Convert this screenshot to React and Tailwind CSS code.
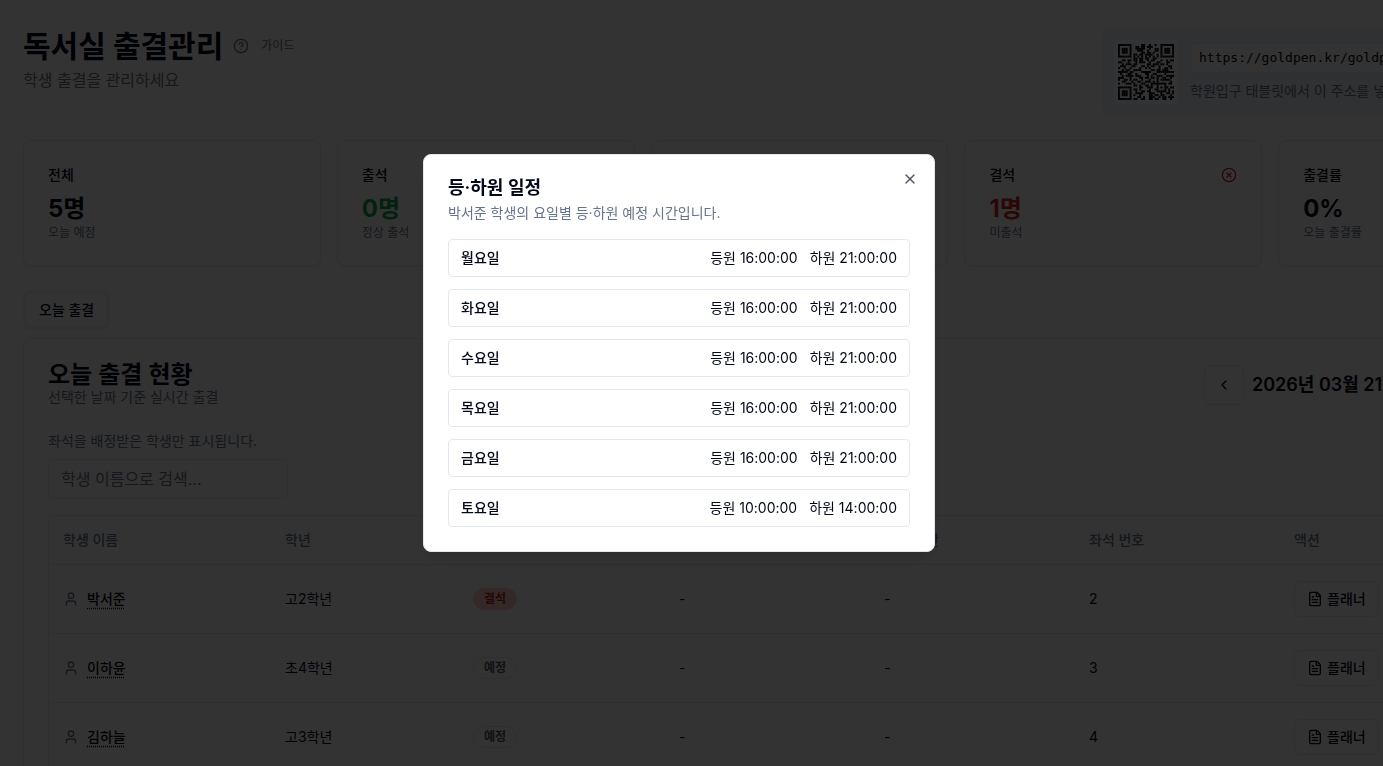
import React, { useState } from "react";
import { ChevronLeft, ChevronRight, CircleHelp, CircleX, FileText, User, X } from "lucide-react";

const stats = [
  { label: "전체", value: "5명", note: "오늘 예정", color: "text-[#020817]" },
  { label: "출석", value: "0명", note: "정상 출석", color: "text-[#16a34a]" },
  { label: "지각", value: "0명", note: "지각 출석", color: "text-[#ea580c]" },
  { label: "결석", value: "1명", note: "미출석", color: "text-[#dc2626]", icon: true },
  { label: "출결률", value: "0%", note: "오늘 출결률", color: "text-[#020817]" },
];

const students = [
  { name: "박서준", grade: "고2학년", status: "결석", seat: 2 },
  { name: "이하윤", grade: "초4학년", status: "예정", seat: 3 },
  { name: "김하늘", grade: "고3학년", status: "예정", seat: 4 },
  { name: "최민서", grade: "중1학년", status: "예정", seat: 5 },
];

const schedule = [
  { day: "월요일", start: "16:00:00", end: "21:00:00" },
  { day: "화요일", start: "16:00:00", end: "21:00:00" },
  { day: "수요일", start: "16:00:00", end: "21:00:00" },
  { day: "목요일", start: "16:00:00", end: "21:00:00" },
  { day: "금요일", start: "16:00:00", end: "21:00:00" },
  { day: "토요일", start: "10:00:00", end: "14:00:00" },
];

// 29x29 modules, one string per row
const qrRows = [
  "#######.....##..#..#..#######",
  "#.....#..##.##.###....#.....#",
  "#.###.#..#####..#..##.#.###.#",
  "#.###.#...###..#...##.#.###.#",
  "#.###.#.....##.##.#...#.###.#",
  "#.....#.##.##.####..#.#.....#",
  "#######.#.#.#.#.#.#.#.#######",
  "........##.##.##..##.........",
  "..##.##.##.##..#.##...#..#.##",
  "##...#...#.###..#...##...##..",
  "..#.###.##.....##.###.##.#...",
  ".###...##...##.#.##..#....##.",
  "#..#..#....#..#.#....#..##.#.",
  "..#.##..####.....##.##.###...",
  "#####.##....#####...#########",
  ".#...##..#....##..##....#....",
  "..#.####.###...#.#..###..####",
  "###...#....##.##.##.#..##..#.",
  "#..##.#.##..#...#...#.#####..",
  "..##...#..##..###.#.#......#.",
  "#...###.#...##...########.##.",
  "........##.#..##.#..#...#....",
  "#######....##..###..#.#.##.##",
  "#.....#.##.#....#..##...#.#..",
  "#.###.#..#..##.##...#####.#.#",
  "#.###.#..####...###...#..##.#",
  "#.###.#.#..#....##.##.##...#.",
  "#.....#...##.#..###..#.##.###",
  "#######.##..##..##.##..##..#.",
];

const QrCode = () => (
  <svg viewBox="0 0 29 29" className="size-14" aria-hidden="true">
    {qrRows.map((row, y) =>
      [...row].map((cell, x) =>
        cell === "#" ? <rect key={`${x}-${y}`} x={x} y={y} width="1" height="1" /> : null
      )
    )}
  </svg>
);

const StatCard = ({ stat }) => (
  <div className="rounded-lg border border-[#e2e8f0] bg-white p-6 shadow-xs">
    <div className="flex items-center justify-between pb-2">
      <h3 className="text-sm font-medium">{stat.label}</h3>
      {stat.icon && <CircleX className="size-4 text-[#dc2626]" />}
    </div>
    <p className={`text-2xl font-bold ${stat.color}`}>{stat.value}</p>
    <p className="text-xs text-[#64748b]">{stat.note}</p>
  </div>
);

const StatusBadge = ({ status }) => (
  <span
    className={
      status === "결석"
        ? "inline-flex rounded-full border border-[#fecaca] bg-[#fecaca] px-2.5 py-0.5 text-xs font-semibold text-[#b91c1c]"
        : "inline-flex rounded-full border border-[#e2e8f0] px-2.5 py-0.5 text-xs font-semibold text-[#4b5563]"
    }
  >
    {status}
  </span>
);

const StudentTable = ({ rows }) => (
  <div className="mt-4 rounded-md border border-[#e2e8f0]">
    <table className="w-full table-fixed text-left text-sm">
      <thead>
        <tr className="h-12 border-b border-[#e2e8f0] text-[#64748b]">
          <th className="w-[222px] px-3.5 font-medium">학생 이름</th>
          <th className="w-[188px] px-3.5 font-medium">학년</th>
          <th className="w-[206px] px-3.5 font-medium">상태</th>
          <th className="w-[205px] px-3.5 font-medium">등원 시간</th>
          <th className="w-[205px] px-3.5 font-medium">하원 시간</th>
          <th className="w-[205px] px-3.5 font-medium">좌석 번호</th>
          <th className="px-3.5 font-medium">액션</th>
        </tr>
      </thead>
      <tbody>
        {rows.map((student) => (
          <tr key={student.name} className="border-b border-[#e2e8f0]">
            <td className="px-3.5 py-4">
              <div className="flex items-center gap-2">
                <User className="size-4 text-[#64748b]" />
                <button
                  type="button"
                  className="font-medium underline decoration-dotted underline-offset-4"
                >
                  {student.name}
                </button>
              </div>
            </td>
            <td className="px-3.5 py-4">{student.grade}</td>
            <td className="px-3.5 py-4">
              <div className="flex">
                <StatusBadge status={student.status} />
              </div>
            </td>
            <td className="px-3.5 py-4">-</td>
            <td className="px-3.5 py-4">-</td>
            <td className="px-3.5 py-4">{student.seat}</td>
            <td className="px-3.5 py-4">
              <button
                type="button"
                className="flex h-9 items-center gap-1 rounded-md border border-[#e2e8f0] bg-white px-3 font-medium"
              >
                <FileText className="size-4" />
                플래너
              </button>
            </td>
          </tr>
        ))}
      </tbody>
    </table>
  </div>
);

const ScheduleDialog = ({ onClose }) => (
  <div className="fixed inset-0 flex items-start justify-center bg-black/80 pt-[154px] pr-[25px]">
    <div
      role="dialog"
      aria-labelledby="schedule-title"
      className="relative w-full max-w-lg rounded-lg border border-[#e2e8f0] bg-white p-6 shadow-lg"
    >
      <h2 id="schedule-title" className="text-lg leading-none font-semibold">
        등·하원 일정
      </h2>
      <p className="mt-1.5 text-sm text-[#64748b]">박서준 학생의 요일별 등·하원 예정 시간입니다.</p>
      <ul className="mt-4 space-y-3">
        {schedule.map((item) => (
          <li
            key={item.day}
            className="flex items-center justify-between rounded border border-[#e2e8f0] px-3 py-2 text-sm"
          >
            <span className="font-medium">{item.day}</span>
            <span className="flex gap-3">
              <span>등원 {item.start}</span>
              <span>하원 {item.end}</span>
            </span>
          </li>
        ))}
      </ul>
      <button
        type="button"
        aria-label="닫기"
        onClick={onClose}
        className="absolute top-4 right-4 opacity-70"
      >
        <X className="size-4" />
      </button>
    </div>
  </div>
);

const App = () => {
  const [open, setOpen] = useState(true);
  const [query, setQuery] = useState("");

  return (
    <div className="h-screen overflow-hidden bg-white font-['Inter','Noto_Sans_CJK_KR',sans-serif] text-[#020817]">
      <div className="min-w-[1600px] pt-7 pr-6 pl-[23px]">
        {/* Header */}
        <header className="flex items-start justify-between">
          <div>
            <div className="flex items-center gap-2.5">
              <h1 className="text-3xl font-bold">독서실 출결관리</h1>
              <button type="button" className="flex items-center gap-3 text-xs text-[#64748b]">
                <CircleHelp className="size-4" />
                가이드
              </button>
            </div>
            <p className="mt-1 text-[#64748b]">학생 출결을 관리하세요</p>
          </div>
          <div className="flex w-[474px] items-center gap-3 rounded-lg bg-[#f1f5f9] p-3">
            <div className="rounded bg-white p-1">
              <QrCode />
            </div>
            <div className="min-w-0 flex-1">
              <code className="block truncate rounded border border-[#e2e8f0] bg-white px-2 py-1 font-['DejaVu_Sans_Mono',monospace] text-[13px] leading-5">
                https://goldpen.kr/goldpen/attendance
              </code>
              <p className="mt-2 text-sm text-[#64748b]">학원입구 태블릿에서 이 주소를 넣어주세요</p>
            </div>
          </div>
        </header>

        {/* Stats */}
        <div className="mt-6 grid grid-cols-5 gap-4">
          {stats.map((stat) => (
            <StatCard key={stat.label} stat={stat} />
          ))}
        </div>

        {/* Tabs */}
        <div className="mt-6 flex">
          <div role="tablist" className="rounded-md bg-[#f1f5f9] p-1">
            <button
              type="button"
              role="tab"
              aria-selected="true"
              className="rounded-sm bg-white px-3 py-1.5 text-sm font-medium shadow-xs"
            >
              오늘 출결
            </button>
          </div>
        </div>

        {/* Today */}
        <section className="mt-2 rounded-lg border border-[#e2e8f0] bg-white p-6 shadow-xs">
          <div className="flex items-center justify-between">
            <div>
              <h2 className="text-2xl leading-none font-semibold">오늘 출결 현황</h2>
              <p className="text-sm text-[#64748b]">선택한 날짜 기준 실시간 출결</p>
            </div>
            <div className="flex w-[347px] items-center gap-2">
              <button
                type="button"
                aria-label="이전 날짜"
                className="flex size-10 items-center justify-center rounded-md border border-[#e2e8f0]"
              >
                <ChevronLeft className="size-4" />
              </button>
              <span className="flex-1 text-lg font-semibold">2026년 03월 21일 토요일</span>
              <button
                type="button"
                aria-label="다음 날짜"
                className="flex size-10 items-center justify-center rounded-md border border-[#e2e8f0]"
              >
                <ChevronRight className="size-4" />
              </button>
            </div>
          </div>
          <label htmlFor="student-search" className="mt-6 block text-sm text-[#64748b]">
            좌석을 배정받은 학생만 표시됩니다.
          </label>
          <input
            id="student-search"
            type="text"
            value={query}
            onChange={(e) => setQuery(e.target.value)}
            placeholder="학생 이름으로 검색..."
            className="mt-2 block h-10 w-60 rounded-md border border-[#e2e8f0] px-3 placeholder:text-[#64748b]"
          />
          <StudentTable rows={students.filter((s) => s.name.includes(query))} />
        </section>
      </div>

      {open && <ScheduleDialog onClose={() => setOpen(false)} />}
    </div>
  );
};

export default App;
